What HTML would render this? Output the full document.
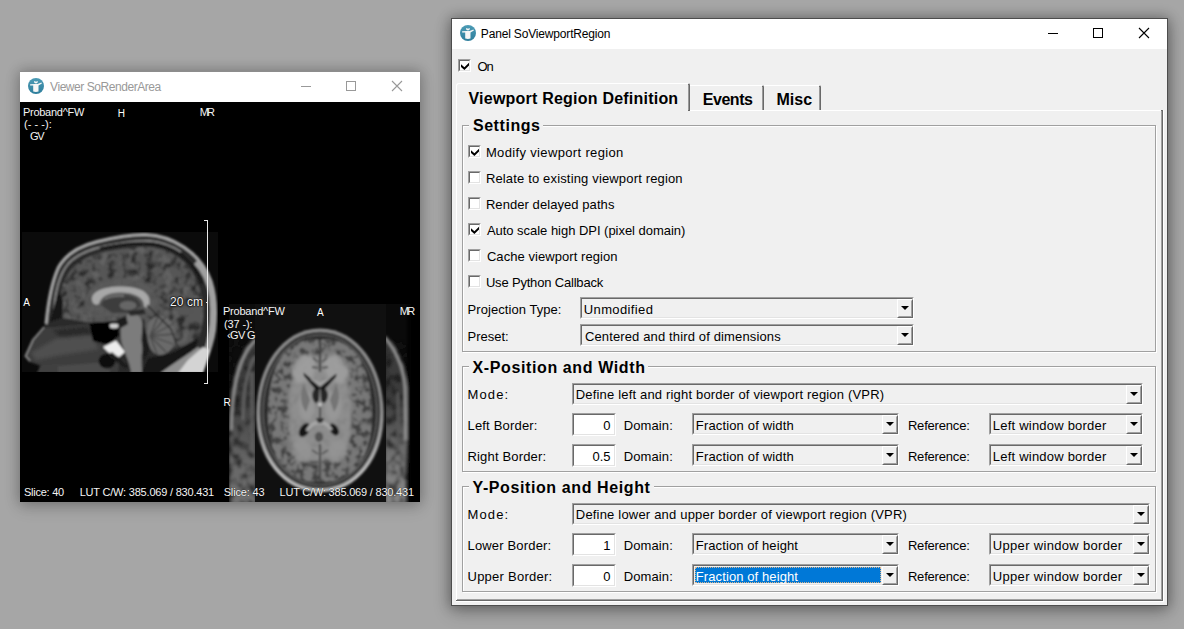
<!DOCTYPE html>
<html><head><meta charset="utf-8"><title>Panel SoViewportRegion</title>
<style>
html,body{margin:0;padding:0}
body{width:1184px;height:629px;overflow:hidden;position:relative;background:#a6a6a6;font-family:"Liberation Sans",sans-serif;}
.t{position:absolute;white-space:nowrap;line-height:1;}
.sunk{position:absolute;box-sizing:border-box;border:1px solid;border-color:#a0a0a0 #fff #fff #a0a0a0;}
.sunk i{position:absolute;left:0;top:0;right:0;bottom:0;border:1px solid;border-color:#696969 #e3e3e3 #e3e3e3 #696969;}
.btn{position:absolute;box-sizing:border-box;background:#f0f0f0;border:1px solid;border-color:#fff #696969 #696969 #fff;}
.btn:before{content:"";position:absolute;left:0;top:0;right:0;bottom:0;border:1px solid;border-color:#f0f0f0 #a0a0a0 #a0a0a0 #f0f0f0;}
.btn b{position:absolute;left:3px;top:6px;width:0;height:0;border-left:4px solid transparent;border-right:4px solid transparent;border-top:4px solid #000;}
.cb{position:absolute;width:13px;height:13px;box-sizing:border-box;background:#fff;border:1px solid;border-color:#a0a0a0 #fff #fff #a0a0a0;}
.cb i{position:absolute;left:0;top:0;right:0;bottom:0;border:1px solid;border-color:#696969 #e3e3e3 #e3e3e3 #696969;}
.cb svg{position:absolute;left:-1px;top:-1px}
.grp{position:absolute;box-sizing:border-box;border:1px solid #a0a0a0;box-shadow:1px 1px 0 #fff;}
.grp i{position:absolute;left:0;top:0;right:0;bottom:0;border-top:1px solid #fff;border-left:1px solid #fff;}
</style></head><body>
<div style="position:absolute;left:20px;top:71px;width:400px;height:431px;background:#000;box-shadow:0 0 12px 1px rgba(0,0,0,.22), 0 5px 16px rgba(0,0,0,.16);border-top:1px solid #8d8d8d;box-sizing:border-box"></div>
<div style="position:absolute;left:20px;top:72px;width:400px;height:30px;background:#fff"></div>
<svg style="position:absolute;left:28px;top:78px" width="16" height="16" viewBox="0 0 16 16"><circle cx="8" cy="8" r="8" fill="url(#ig)"/><path d="M2.1 6.3 L6.5 6.1 L9.5 6.1 L13.4 4.4 L13.9 5.5 L10.5 7.4 L10.5 13.6 Q8 14.4 5.2 13.6 L5.2 7.6 L2.1 7.6 Z" fill="#f6f6f6"/><path d="M6 2.9 Q8 4.3 9.8 2.9 L9.8 4 Q9.6 5.4 8 5.4 Q6.2 5.4 6 4 Z" fill="#f6f6f6"/></svg>
<svg style="position:absolute;left:290px;top:72px" width="130" height="30" viewBox="0 0 130 30"><path d="M11 14.5 H21" stroke="#999" stroke-width="1" fill="none"/><rect x="56.5" y="9.5" width="9" height="9" stroke="#999" fill="none"/><path d="M102 9 L112 19 M112 9 L102 19" stroke="#999" stroke-width="1.1" fill="none"/></svg>
<svg style="position:absolute;left:20px;top:102px" width="400" height="400" viewBox="20 102 400 400">
<defs>
<filter id="b1" x="-10%" y="-10%" width="120%" height="120%"><feGaussianBlur stdDeviation="0.9"/></filter>
<filter id="b2" x="-10%" y="-10%" width="120%" height="120%"><feGaussianBlur stdDeviation="1.6"/></filter>
<filter id="b3" x="-20%" y="-20%" width="140%" height="140%"><feGaussianBlur stdDeviation="3"/></filter>
<filter id="tx" color-interpolation-filters="sRGB" x="0" y="0" width="100%" height="100%"><feTurbulence type="fractalNoise" baseFrequency="0.13" numOctaves="2" seed="4" result="n"/><feColorMatrix in="n" type="matrix" values="0 0 0 0 0  0 0 0 0 0  0 0 0 0 0  -4 0 0 0 2.1"/></filter>
<filter id="tx2" color-interpolation-filters="sRGB" x="0" y="0" width="100%" height="100%"><feTurbulence type="fractalNoise" baseFrequency="0.11" numOctaves="2" seed="9" result="n"/><feColorMatrix in="n" type="matrix" values="0 0 0 0 0.45  0 0 0 0 0.45  0 0 0 0 0.45  4 0 0 0 -2.0"/></filter>
<filter id="tx3" color-interpolation-filters="sRGB" x="0" y="0" width="100%" height="100%"><feTurbulence type="fractalNoise" baseFrequency="0.16" numOctaves="2" seed="12" result="n"/><feColorMatrix in="n" type="matrix" values="0 0 0 0 0.17  0 0 0 0 0.17  0 0 0 0 0.17  -4.5 0 0 0 2.45"/></filter>
<filter id="tx4" color-interpolation-filters="sRGB" x="0" y="0" width="100%" height="100%"><feTurbulence type="fractalNoise" baseFrequency="0.12" numOctaves="2" seed="21" result="n"/><feColorMatrix in="n" type="matrix" values="0 0 0 0 0.08  0 0 0 0 0.08  0 0 0 0 0.08  -4 0 0 0 2.2"/></filter>
<linearGradient id="gl" x1="0" y1="0" x2="0" y2="1"><stop offset="0" stop-color="#6c6c6c" stop-opacity="0"/><stop offset="0.6" stop-color="#6c6c6c" stop-opacity="0.9"/><stop offset="1" stop-color="#707070"/></linearGradient>
<linearGradient id="gr" x1="0" y1="0" x2="0" y2="1"><stop offset="0" stop-color="#808080" stop-opacity="0"/><stop offset="0.6" stop-color="#808080" stop-opacity="0.9"/><stop offset="1" stop-color="#868686"/></linearGradient>
<linearGradient id="gsk" gradientUnits="userSpaceOnUse" x1="0" y1="400" x2="0" y2="470"><stop offset="0" stop-color="#bcbcbc" stop-opacity="0"/><stop offset="1" stop-color="#bcbcbc" stop-opacity="1"/></linearGradient>
<clipPath id="cs"><rect x="20" y="232" width="198" height="140"/></clipPath>
<clipPath id="ca"><rect x="255" y="304" width="131" height="198"/></clipPath>
<clipPath id="cl"><rect x="229" y="304" width="26" height="198"/></clipPath>
<clipPath id="cr"><rect x="386" y="304" width="25" height="198"/></clipPath>
</defs>
<rect x="22" y="232" width="196" height="140" fill="#0b0b0b"/>
<g clip-path="url(#cs)"><g filter="url(#b1)">
<path d="M46 324 C48 302 51 284 58 268 C65 255 79 246 97 241.5 C117 236.5 134 234 146 234.5 C160 235 172 239 184 247 C196 255 206 267 211 281 C215.5 295 216.5 312 214.5 330 C212.5 345 207 358 201 374 L36 374 L40 366 L29 362 L24.5 356 L32 339 L44 327 Z" fill="#2c2c2c"/>
<path d="M45 328 L112 322 L122 340 L118 372 L40 372 L41 365 L30 361 L26.5 356 L34 341 Z" fill="#3e3e3e"/>
<path d="M31 353 L58 338 L92 335 L98 349 L60 355 L36 360 Z" fill="#505050" filter="url(#b2)"/>
<path d="M52 330 L88 326 L92 334 L60 337 Z" fill="#2c2c2c" filter="url(#b2)"/>
<path d="M58 366 L108 362 L110 373 L58 373 Z" fill="#4c4c4c"/>
<path d="M40 366 L58 364 L58 373 L38 373 Z" fill="#404040"/>
<path d="M44 327 L33 340 L25.5 356 L30 361" stroke="#8a8a8a" stroke-width="1.8" fill="none"/>
<path d="M63 318 C58 300 61 285 68 274 C76 262 90 254.5 106 251.5 C124 248 140 246.5 150 247 C164 248.5 175 254 185 263 C194 272 200 286 202.5 300 C204.5 316 202 332 196 344 C190 352 183 355 176 351 L150 344 L120 322 L92 323 Z" fill="#565656"/>
<clipPath id="cb"><path d="M63 318 C58 300 61 285 68 274 C76 262 90 254.5 106 251.5 C124 248 140 246.5 150 247 C164 248.5 175 254 185 263 C194 272 200 286 202.5 300 C204.5 316 202 332 196 344 C190 352 183 355 176 351 L150 344 L120 322 L92 323 Z"/></clipPath>
<g clip-path="url(#cb)"><rect x="55" y="240" width="155" height="120" filter="url(#tx)" opacity="0.5"/><rect x="55" y="240" width="155" height="120" filter="url(#tx2)" opacity="0.5"/></g>
<path d="M84 306 C84 288 102 279 122 279 C142 279 156 287 158 302 L150 316 L96 318 Z" fill="#5b5b5b" opacity="0.85"/>
<path d="M46 324 C48 302 51 284 58 268 C65 255 79 246 97 241.5 C117 236.5 134 234 146 234.5 C160 235 172 239 184 247 C196 255 206 267 211 281 C215.5 295 216.5 312 214.5 330 C212.5 345 207 358 201 374" fill="none" stroke="#a6a6a6" stroke-width="3"/>
<path d="M196 262 C204 270 209.5 282 212 296 C214 312 212.5 330 209 344 C206 355 202 364 198 372" fill="none" stroke="#a0a0a0" stroke-width="5.5"/>
<path d="M54 312 C55 290 60 274 68 264 C77 254 91 249 105 246 C124 242 140 240.5 150 241 C162 242 172 246 181 252" fill="none" stroke="#868686" stroke-width="2"/>
<path d="M100 248.5 C124 243.5 140 243 150 243.5 C162 244.5 172 248.5 182 255.5 C192 263 199 274 202 284" fill="none" stroke="#161616" stroke-width="3"/>
<path d="M50 322 L62 318 L63 300 L58 292 Z" fill="#141414"/>
<path d="M89 323 L117 321 L119 336 L108 345 L93 341 Z" fill="#040404"/>
<ellipse cx="107" cy="361" rx="8.5" ry="7.5" fill="#0b0b0b"/>
<ellipse cx="114" cy="326" rx="4.5" ry="2.4" fill="#cfcfcf"/>
<path d="M103 347 L116 340.5 L125 352 L119 357 L108 352 Z" fill="#ececec"/>
<path d="M112 352 L128 366 L126 369 L108 356 Z" fill="#1a1a1a"/>
<path d="M92 300 C91 291.5 104 286.5 120 286.5 C136 286.5 148.5 290.5 149.5 300 C150.5 306.5 146 309.5 144 306 C144 297 134 292.5 120 292.5 C108 292.5 101 296.5 99 304 C96 306 92.5 304 92 300 Z" fill="#a8a8a8"/>
<path d="M101 305 C104 297 112 295 122 295 C132 295 140 298 141 306 L130 313 L112 313 Z" fill="#3e3e3e"/>
<ellipse cx="128" cy="305.5" rx="8.5" ry="4.5" fill="#666"/>
<path d="M105 299 C110 296 118 295.5 124 296" stroke="#6e6e6e" stroke-width="2" fill="none"/>
<path d="M124 318 C128 312 138 312 141.5 320 C146 332 143.5 344 141.5 356 L142 373 L131 373 C130 360 122 350 121 338 C120 330 121 323 124 318 Z" fill="#7c7c7c"/>
<path d="M117 320 L126 315.5 L128 324 L121 328 Z" fill="#1e1e1e"/>
<path d="M128 311 L144 309 L146 314 L130 316 Z" fill="#2a2a2a"/>
<path d="M148 324 C154 312 170 314 174 328 C178 342 172 354 160 355 C150 355 145 340 148 324 Z" fill="#6a6a6a"/>
<path d="M150 336 L166 317 M150 336 L173 324 M150 336 L175 334 M150 336 L173 344 M150 336 L166 352 M150 336 L157 354 M150 336 L158 316" stroke="#474747" stroke-width="1.3" fill="none"/>
<path d="M143 318 L149.5 350 L144 362 L141.5 340 Z" fill="#1c1c1c"/>
<path d="M147 305 L171 329 L179 351" stroke="#2e2e2e" stroke-width="1.6" fill="none"/>
<path d="M148 358 L172 353 L198 338 L196 349 L160 374 L141 374 Z" fill="#161616"/>
<path d="M160 373 L178 360 L198 347 L204 351 L196 373 Z" fill="#8e8e8e"/>
<path d="M178 373 L188 360 L203 347 L210 350 L203 373 Z" fill="#d4d4d4"/>
<path d="M158 373 L192 350" stroke="#101010" stroke-width="1.6"/>
</g></g>
<path d="M203.5 220.5 H207.5 V383.5 H203.5 M205.5 302.5 H207.5" stroke="#e8e8e8" stroke-width="1" fill="none" shape-rendering="crispEdges"/>
<rect x="229" y="304" width="182" height="198" fill="#0a0a0a"/>
<g clip-path="url(#cl)"><rect x="229" y="304" width="26" height="198" fill="#0c0c0c"/><g filter="url(#b2)">
<path d="M231 410 C231 380 238 352 256 338 L256 504 L229 504 L229 440 Z" fill="#3c3c3c"/>
<rect x="229" y="400" width="27" height="104" fill="url(#gl)"/>
<rect x="229" y="340" width="26" height="164" filter="url(#tx4)" opacity="0.7"/>
<path d="M231 430 C231 392 238 356 256 339" stroke="#9c9c9c" stroke-width="2.6" fill="none"/>
<path d="M243 420 C243 392 247 370 255 356" stroke="#6c6c6c" stroke-width="2.2" fill="none"/>
<path d="M252 372 L252 450" stroke="#5e5e5e" stroke-width="3"/>
</g></g>
<g clip-path="url(#cr)"><rect x="386" y="304" width="25" height="198" fill="#0a0a0a"/><g filter="url(#b2)">
<path d="M385 338 C396 350 404 366 405.5 386 L406 504 L385 504 Z" fill="#3a3a3a"/>
<rect x="385" y="400" width="21" height="104" fill="url(#gr)"/>
<rect x="386" y="340" width="22" height="164" filter="url(#tx4)" opacity="0.7"/>
<path d="M385 337 C396 350 404 366 405.5 388 L406 440" stroke="#a4a4a4" stroke-width="2.6" fill="none"/>
<path d="M406 440 L405 470" stroke="#6a6a6a" stroke-width="2.4" fill="none"/>
<path d="M398 392 L398 452" stroke="#585858" stroke-width="3"/>
<rect x="407.5" y="304" width="4" height="200" fill="#050505"/>
</g></g>
<g clip-path="url(#ca)"><rect x="255" y="304" width="131" height="198" fill="#101010"/><g filter="url(#b1)">
<path d="M320 328.5 C358.1 328.5 383.5 367.62 383.5 412 C383.5 457.27 356.83 491.5 320 491.5 C283.17 491.5 256.5 457.27 256.5 412 C256.5 367.62 281.9 328.5 320 328.5 Z" fill="#8c8c8c"/>
<clipPath id="cbk"><rect x="255" y="440" width="131" height="62"/></clipPath>
<path d="M320 329.3 C357.62 329.3 382.7 368.036 382.7 412 C382.7 456.806 356.366 490.7 320 490.7 C283.634 490.7 257.3 456.806 257.3 412 C257.3 368.036 282.38 329.3 320 329.3 Z" fill="none" stroke="url(#gsk)" stroke-width="3"/>
<path d="M320 331.7 C356.18 331.7 380.3 369.284 380.3 412 C380.3 455.414 354.974 488.3 320 488.3 C285.026 488.3 259.7 455.414 259.7 412 C259.7 369.284 283.82 331.7 320 331.7 Z" fill="#333"/>
<path d="M320 334.4 C354.56 334.4 377.6 370.688 377.6 412 C377.6 453.848 353.408 485.6 320 485.6 C286.592 485.6 262.4 453.848 262.4 412 C262.4 370.688 285.44 334.4 320 334.4 Z" fill="#5e5e5e"/>
<path d="M320 335.8 C353.72 335.8 376.2 371.416 376.2 412 C376.2 453.036 352.596 484.2 320 484.2 C287.404 484.2 263.8 453.036 263.8 412 C263.8 371.416 286.28 335.8 320 335.8 Z" fill="#2a2a2a"/>
<path d="M320 340 C331 337 348 342 358 356 C367 369 371 388 372 408 C373 430 369 452 358 466 C348 478 332 484 320 481 C308 484 292 478 282 466 C271 452 267 430 268 408 C269 388 273 369 282 356 C292 342 309 337 320 340 Z" fill="#787878"/>
<clipPath id="cba"><path d="M320 340 C331 337 348 342 358 356 C367 369 371 388 372 408 C373 430 369 452 358 466 C348 478 332 484 320 481 C308 484 292 478 282 466 C271 452 267 430 268 408 C269 388 273 369 282 356 C292 342 309 337 320 340 Z"/></clipPath>
<g clip-path="url(#cba)"><rect x="262" y="334" width="116" height="152" filter="url(#tx3)" opacity="0.7"/></g>
<g filter="url(#b2)">
<path d="M320 356 C332 354 344 364 348 380 C352 398 353 420 350 438 C346 454 336 462 320 460 C304 462 294 454 290 438 C287 420 288 398 292 380 C296 364 308 354 320 356 Z" fill="#929292" opacity="0.85"/>
<path d="M300 356 C308 352 316 356 316 366 L312 380 L298 384 L290 372 Z M340 356 C332 352 324 356 324 366 L328 380 L342 384 L350 372 Z" fill="#9e9e9e" opacity="0.9"/>
<path d="M296 440 C300 436 310 440 312 448 L308 462 L298 462 L292 452 Z M344 440 C340 436 330 440 328 448 L332 462 L342 462 L348 452 Z" fill="#949494" opacity="0.85"/>
<ellipse cx="307" cy="406" rx="8" ry="15" fill="#979797"/><ellipse cx="333" cy="406" rx="8" ry="15" fill="#979797"/>
</g>
<path d="M304 384 C300 392 300 404 306 412 L310 400 Z M336 384 C340 392 340 404 334 412 L330 400 Z" fill="#747474"/>
<path d="M320 340 L320 372" stroke="#3c3c3c" stroke-width="2.2"/>
<path d="M313 358 L318 362 M327 358 L322 362 M312 367 L318 368 M328 367 L322 368" stroke="#555" stroke-width="1.8"/>
<path d="M320 444 L320 482" stroke="#444" stroke-width="2"/>
<path d="M312 450 L318 454 M328 450 L322 454 M310 462 L318 462 M330 462 L322 462 M313 472 L318 470 M327 472 L322 470" stroke="#555" stroke-width="1.8"/>
<path d="M303.5 372.5 L320 386 L336.5 373.5 L336 377 L325 389 C327 394 326.5 399 323.5 402.5 L321 400 L320.6 389 L319.4 389 L319 400 L316.5 402.5 C313.5 399 313 394 315 389 L304 376 Z" fill="#141414"/>
<path d="M314.5 389 C311 393 311.5 400 316 403.5 L318.6 401 L318.6 390 Z M325.5 389 C329 393 328.5 400 324 403.5 L321.4 401 L321.4 390 Z" fill="#262626"/>
<path d="M309 378 L320 387 L331 378 L320 382 Z" fill="#a2a2a2"/>
<circle cx="320" cy="404.5" r="1.7" fill="#c8c8c8"/>
<path d="M320 407 L320 420" stroke="#444" stroke-width="1.8"/>
<ellipse cx="304.5" cy="430" rx="4.6" ry="7.6" transform="rotate(32 304.5 430)" fill="#141414"/>
<ellipse cx="334" cy="429.5" rx="4" ry="6.6" transform="rotate(-32 334 429.5)" fill="#141414"/>
<path d="M307 431 C310 425 314.5 422.5 319.5 422.5 C324.5 422.5 328.5 425 331.5 430" stroke="#a6a6a6" stroke-width="3.4" fill="none"/>
<path d="M316 418 L324 418 L322 423 L318 423 Z" fill="#333"/>
<ellipse cx="319" cy="437" rx="4" ry="5" fill="#555"/>
</g></g>
</svg>
<div style="position:absolute;left:451px;top:18px;width:717px;height:588px;background:#f0f0f0;border:1px solid #4d4d4d;box-sizing:border-box;box-shadow:0 0 12px 1px rgba(0,0,0,.30), 0 6px 17px rgba(0,0,0,.24)"></div>
<div style="position:absolute;left:452px;top:19px;width:715px;height:30px;background:#fff"></div>
<svg style="position:absolute;left:460px;top:25px" width="16" height="16" viewBox="0 0 16 16"><defs><linearGradient id="ig" x1="0" y1="0" x2="0" y2="1"><stop offset="0" stop-color="#4c9bb5"/><stop offset="1" stop-color="#2e7e9c"/></linearGradient></defs><circle cx="8" cy="8" r="8" fill="url(#ig)"/><path d="M2.1 6.3 L6.5 6.1 L9.5 6.1 L13.4 4.4 L13.9 5.5 L10.5 7.4 L10.5 13.6 Q8 14.4 5.2 13.6 L5.2 7.6 L2.1 7.6 Z" fill="#f6f6f6"/><path d="M6 2.9 Q8 4.3 9.8 2.9 L9.8 4 Q9.6 5.4 8 5.4 Q6.2 5.4 6 4 Z" fill="#f6f6f6"/></svg>
<div id="p_title" class="t" style="left:480.8px;top:28.03px;font-size:12px;font-weight:normal;color:#000;letter-spacing:-0.167px;">Panel SoViewportRegion</div>
<svg style="position:absolute;left:1040px;top:22px" width="120" height="24" viewBox="0 0 120 24"><path d="M8 11.5 H18" stroke="#000" stroke-width="1" fill="none"/><rect x="53.5" y="6.5" width="9" height="9" stroke="#000" fill="none"/><path d="M99 6 L109 16 M109 6 L99 16" stroke="#000" stroke-width="1.1" fill="none"/></svg>
<div class="cb" style="left:458px;top:59px"><i></i><svg width="13" height="13" viewBox="0 0 13 13"><path d="M3 5.2 L3 8 L6.4 11 L11 6.4 L11 3.8 L6.4 8.2 Z" fill="#000"/></svg></div>
<div id="on" class="t" style="left:477.5px;top:59.70px;font-size:13px;font-weight:normal;color:#000;letter-spacing:-1.000px;">On</div>
<div style="position:absolute;left:456px;top:110px;width:708px;height:492px;box-sizing:border-box;border:1px solid #fff"></div>
<div style="position:absolute;left:456px;top:110px;width:707px;height:491px;box-sizing:border-box;border-right:2px solid #696969;border-bottom:1px solid #696969"></div>
<div style="position:absolute;left:1161px;top:111px;width:1px;height:489px;background:#a0a0a0"></div>
<div style="position:absolute;left:457px;top:599px;width:705px;height:1px;background:#a0a0a0"></div>
<div style="position:absolute;left:456px;top:83px;width:234px;height:28px;background:#f0f0f0;box-sizing:border-box;border-top:1px solid #fff;border-left:1px solid #fff;border-right:2px solid #696969;border-top-left-radius:3px;border-top-right-radius:2px"></div>
<div style="position:absolute;left:688px;top:85px;width:1px;height:25px;background:#9a9a9a"></div>
<div style="position:absolute;left:690px;top:85px;width:74px;height:25px;box-sizing:border-box;border-top:1px solid #fff;border-right:2px solid #696969;border-top-right-radius:2px"></div>
<div style="position:absolute;left:762px;top:87px;width:1px;height:23px;background:#9a9a9a"></div>
<div style="position:absolute;left:764px;top:85px;width:57px;height:25px;box-sizing:border-box;border-top:1px solid #fff;border-right:2px solid #696969;border-top-right-radius:2px"></div>
<div style="position:absolute;left:819px;top:87px;width:1px;height:23px;background:#9a9a9a"></div>
<div id="tab1" class="t" style="left:468.5px;top:90.61px;font-size:16px;font-weight:bold;color:#000;letter-spacing:0.220px;">Viewport Region Definition</div>
<div id="tab2" class="t" style="left:702.7px;top:91.61px;font-size:16px;font-weight:bold;color:#000;letter-spacing:-0.440px;">Events</div>
<div id="tab3" class="t" style="left:776.5px;top:91.61px;font-size:16px;font-weight:bold;color:#000;letter-spacing:0.000px;">Misc</div>
<div class="grp" style="left:462px;top:125px;width:694px;height:227px"><i></i></div>
<div style="position:absolute;left:469.4px;top:123px;width:74.0px;height:5px;background:#f0f0f0"></div>
<div id="g1" class="t" style="left:472.9px;top:118.41px;font-size:16px;font-weight:bold;color:#000;letter-spacing:0.571px;">Settings</div>
<div class="cb" style="left:468px;top:145px"><i></i><svg width="13" height="13" viewBox="0 0 13 13"><path d="M3 5.2 L3 8 L6.4 11 L11 6.4 L11 3.8 L6.4 8.2 Z" fill="#000"/></svg></div>
<div id="c1" class="t" style="left:485.9px;top:145.70px;font-size:13px;font-weight:normal;color:#000;letter-spacing:0.352px;">Modify viewport region</div>
<div class="cb" style="left:468px;top:171px"><i></i></div>
<div id="c2" class="t" style="left:485.9px;top:171.70px;font-size:13px;font-weight:normal;color:#000;letter-spacing:0.158px;">Relate to existing viewport region</div>
<div class="cb" style="left:468px;top:197px"><i></i></div>
<div id="c3" class="t" style="left:485.9px;top:197.70px;font-size:13px;font-weight:normal;color:#000;letter-spacing:0.068px;">Render delayed paths</div>
<div class="cb" style="left:468px;top:223px"><i></i><svg width="13" height="13" viewBox="0 0 13 13"><path d="M3 5.2 L3 8 L6.4 11 L11 6.4 L11 3.8 L6.4 8.2 Z" fill="#000"/></svg></div>
<div id="c4" class="t" style="left:486.9px;top:223.70px;font-size:13px;font-weight:normal;color:#000;letter-spacing:-0.030px;">Auto scale high DPI (pixel domain)</div>
<div class="cb" style="left:468px;top:249px"><i></i></div>
<div id="c5" class="t" style="left:486.9px;top:249.70px;font-size:13px;font-weight:normal;color:#000;letter-spacing:0.065px;">Cache viewport region</div>
<div class="cb" style="left:468px;top:275px"><i></i></div>
<div id="c6" class="t" style="left:485.9px;top:275.70px;font-size:13px;font-weight:normal;color:#000;letter-spacing:-0.183px;">Use Python Callback</div>
<div id="l_proj" class="t" style="left:467.5px;top:302.70px;font-size:13px;font-weight:normal;color:#000;letter-spacing:0.067px;">Projection Type:</div>
<div class="sunk" style="left:580px;top:297px;width:334px;height:22px;background:#f0f0f0"><i></i></div>
<div class="btn" style="left:897px;top:299px;width:16px;height:19px"><b></b></div>
<div id="v_proj" class="t" style="left:583.8px;top:302.70px;font-size:13px;font-weight:normal;color:#000;letter-spacing:0.367px;">Unmodified</div>
<div id="l_pre" class="t" style="left:467.5px;top:329.70px;font-size:13px;font-weight:normal;color:#000;letter-spacing:0.000px;">Preset:</div>
<div class="sunk" style="left:580px;top:324px;width:334px;height:22px;background:#f0f0f0"><i></i></div>
<div class="btn" style="left:897px;top:326px;width:16px;height:19px"><b></b></div>
<div id="v_pre" class="t" style="left:584.9px;top:329.70px;font-size:13px;font-weight:normal;color:#000;letter-spacing:0.139px;">Centered and third of dimensions</div>
<div class="grp" style="left:462px;top:366px;width:694px;height:106px"><i></i></div>
<div style="position:absolute;left:469px;top:364px;width:178.70000000000005px;height:5px;background:#f0f0f0"></div>
<div id="xg" class="t" style="left:472.5px;top:359.51px;font-size:16px;font-weight:bold;color:#000;letter-spacing:0.616px;">X-Position and Width</div>
<div id="xlm" class="t" style="left:467.5px;top:387.70px;font-size:13px;font-weight:normal;color:#000;letter-spacing:1.125px;">Mode:</div>
<div class="sunk" style="left:572px;top:383px;width:571px;height:22px;background:#f0f0f0"><i></i></div>
<div class="btn" style="left:1126px;top:385px;width:16px;height:19px"><b></b></div>
<div id="xvm" class="t" style="left:575.8px;top:387.70px;font-size:13px;font-weight:normal;color:#000;letter-spacing:0.175px;">Define left and right border of viewport region (VPR)</div>
<div id="xl0" class="t" style="left:467.5px;top:418.70px;font-size:13px;font-weight:normal;color:#000;letter-spacing:0.182px;">Left Border:</div>
<div class="sunk" style="left:572px;top:413px;width:44px;height:23px;background:#fff"><i></i></div>
<div id="xv0" class="t" style="left:0.5px;top:418.70px;font-size:13px;font-weight:normal;color:#000;letter-spacing:0.000px;left:auto;right:573.5px;">0</div>
<div id="xd0" class="t" style="left:623.8px;top:418.70px;font-size:13px;font-weight:normal;color:#000;letter-spacing:0.100px;">Domain:</div>
<div class="sunk" style="left:692px;top:413px;width:207px;height:22px;background:#f0f0f0"><i></i></div>
<div class="btn" style="left:882px;top:415px;width:16px;height:19px"><b></b></div>
<div id="xf0" class="t" style="left:695.8px;top:418.70px;font-size:13px;font-weight:normal;color:#000;letter-spacing:0.156px;">Fraction of width</div>
<div id="xr0" class="t" style="left:907.9px;top:418.70px;font-size:13px;font-weight:normal;color:#000;letter-spacing:-0.189px;">Reference:</div>
<div class="sunk" style="left:989px;top:413px;width:154px;height:22px;background:#f0f0f0"><i></i></div>
<div class="btn" style="left:1126px;top:415px;width:16px;height:19px"><b></b></div>
<div id="xw0" class="t" style="left:992.8px;top:418.70px;font-size:13px;font-weight:normal;color:#000;letter-spacing:0.218px;">Left window border</div>
<div id="xl1" class="t" style="left:467.5px;top:449.70px;font-size:13px;font-weight:normal;color:#000;letter-spacing:0.167px;">Right Border:</div>
<div class="sunk" style="left:572px;top:444px;width:44px;height:23px;background:#fff"><i></i></div>
<div id="xv1" class="t" style="left:0.5px;top:449.70px;font-size:13px;font-weight:normal;color:#000;letter-spacing:0.000px;left:auto;right:573.5px;">0.5</div>
<div id="xd1" class="t" style="left:623.8px;top:449.70px;font-size:13px;font-weight:normal;color:#000;letter-spacing:0.100px;">Domain:</div>
<div class="sunk" style="left:692px;top:444px;width:207px;height:22px;background:#f0f0f0"><i></i></div>
<div class="btn" style="left:882px;top:446px;width:16px;height:19px"><b></b></div>
<div id="xf1" class="t" style="left:695.8px;top:449.70px;font-size:13px;font-weight:normal;color:#000;letter-spacing:0.156px;">Fraction of width</div>
<div id="xr1" class="t" style="left:907.9px;top:449.70px;font-size:13px;font-weight:normal;color:#000;letter-spacing:-0.189px;">Reference:</div>
<div class="sunk" style="left:989px;top:444px;width:154px;height:22px;background:#f0f0f0"><i></i></div>
<div class="btn" style="left:1126px;top:446px;width:16px;height:19px"><b></b></div>
<div id="xw1" class="t" style="left:992.8px;top:449.70px;font-size:13px;font-weight:normal;color:#000;letter-spacing:0.218px;">Left window border</div>
<div class="grp" style="left:462px;top:486px;width:694px;height:106px"><i></i></div>
<div style="position:absolute;left:469px;top:484px;width:185px;height:5px;background:#f0f0f0"></div>
<div id="yg" class="t" style="left:472.5px;top:479.51px;font-size:16px;font-weight:bold;color:#000;letter-spacing:0.600px;">Y-Position and Height</div>
<div id="ylm" class="t" style="left:467.5px;top:507.70px;font-size:13px;font-weight:normal;color:#000;letter-spacing:1.125px;">Mode:</div>
<div class="sunk" style="left:572px;top:503px;width:578px;height:22px;background:#f0f0f0"><i></i></div>
<div class="btn" style="left:1133px;top:505px;width:16px;height:19px"><b></b></div>
<div id="yvm" class="t" style="left:575.8px;top:507.70px;font-size:13px;font-weight:normal;color:#000;letter-spacing:0.192px;">Define lower and upper border of viewport region (VPR)</div>
<div id="yl0" class="t" style="left:467.5px;top:538.70px;font-size:13px;font-weight:normal;color:#000;letter-spacing:0.167px;">Lower Border:</div>
<div class="sunk" style="left:572px;top:533px;width:44px;height:23px;background:#fff"><i></i></div>
<div id="yv0" class="t" style="left:-0.5px;top:538.70px;font-size:13px;font-weight:normal;color:#000;letter-spacing:0.000px;left:auto;right:573.5px;">1</div>
<div id="yd0" class="t" style="left:623.8px;top:538.70px;font-size:13px;font-weight:normal;color:#000;letter-spacing:0.100px;">Domain:</div>
<div class="sunk" style="left:692px;top:533px;width:207px;height:22px;background:#f0f0f0"><i></i></div>
<div class="btn" style="left:882px;top:535px;width:16px;height:19px"><b></b></div>
<div id="yf0" class="t" style="left:695.8px;top:538.70px;font-size:13px;font-weight:normal;color:#000;letter-spacing:0.100px;">Fraction of height</div>
<div id="yr0" class="t" style="left:907.9px;top:538.70px;font-size:13px;font-weight:normal;color:#000;letter-spacing:-0.189px;">Reference:</div>
<div class="sunk" style="left:989px;top:533px;width:161px;height:22px;background:#f0f0f0"><i></i></div>
<div class="btn" style="left:1133px;top:535px;width:16px;height:19px"><b></b></div>
<div id="yw0" class="t" style="left:992.8px;top:538.70px;font-size:13px;font-weight:normal;color:#000;letter-spacing:0.317px;">Upper window border</div>
<div id="yl1" class="t" style="left:467.5px;top:569.70px;font-size:13px;font-weight:normal;color:#000;letter-spacing:0.250px;">Upper Border:</div>
<div class="sunk" style="left:572px;top:564px;width:44px;height:23px;background:#fff"><i></i></div>
<div id="yv1" class="t" style="left:0.5px;top:569.70px;font-size:13px;font-weight:normal;color:#000;letter-spacing:0.000px;left:auto;right:573.5px;">0</div>
<div id="yd1" class="t" style="left:623.8px;top:569.70px;font-size:13px;font-weight:normal;color:#000;letter-spacing:0.100px;">Domain:</div>
<div class="sunk" style="left:692px;top:564px;width:207px;height:22px;background:#f0f0f0"><i></i></div>
<div class="btn" style="left:882px;top:566px;width:16px;height:19px"><b></b></div>
<div style="position:absolute;left:695px;top:567px;width:186px;height:16px;background:#0078d7;outline:1px dotted #d8b48c;outline-offset:-1px"></div>
<div id="yf1" class="t" style="left:695.8px;top:569.70px;font-size:13px;font-weight:normal;color:#fff;letter-spacing:0.100px;">Fraction of height</div>
<div id="yr1" class="t" style="left:907.9px;top:569.70px;font-size:13px;font-weight:normal;color:#000;letter-spacing:-0.189px;">Reference:</div>
<div class="sunk" style="left:989px;top:564px;width:161px;height:22px;background:#f0f0f0"><i></i></div>
<div class="btn" style="left:1133px;top:566px;width:16px;height:19px"><b></b></div>
<div id="yw1" class="t" style="left:992.8px;top:569.70px;font-size:13px;font-weight:normal;color:#000;letter-spacing:0.317px;">Upper window border</div>
<div id="v_title" class="t" style="left:50.1px;top:81.03px;font-size:12px;font-weight:normal;color:#999;letter-spacing:-0.450px;">Viewer SoRenderArea</div>
<div id="va1" class="t" style="left:23.0px;top:106.86px;font-size:11px;font-weight:normal;color:#f4f4f4;letter-spacing:-0.278px;">Proband^FW</div>
<div id="va2" class="t" style="left:24.0px;top:119.16px;font-size:11px;font-weight:normal;color:#f4f4f4;letter-spacing:0.043px;">(- - -):</div>
<div id="va3" class="t" style="left:30.0px;top:130.76px;font-size:11px;font-weight:normal;color:#f4f4f4;letter-spacing:-1.400px;">GV</div>
<div id="va4" class="t" style="left:117.8px;top:108.59px;font-size:10px;font-weight:normal;color:#fff;letter-spacing:0.000px;">H</div>
<div id="va5" class="t" style="left:199.7px;top:106.86px;font-size:11px;font-weight:normal;color:#f4f4f4;letter-spacing:-1.800px;">MR</div>
<div id="va6" class="t" style="left:23.2px;top:297.69px;font-size:10px;font-weight:normal;color:#fff;letter-spacing:0.000px;">A</div>
<div id="va7" class="t" style="left:170.0px;top:295.83px;font-size:12px;font-weight:normal;color:#f4f4f4;letter-spacing:0.100px;text-shadow:0 0 2px #000,0 0 2px #000,0 0 1px #000;">20 cm</div>
<div id="va8" class="t" style="left:24.0px;top:487.16px;font-size:11px;font-weight:normal;color:#f4f4f4;letter-spacing:-0.250px;">Slice: 40</div>
<div id="va9" class="t" style="left:79.7px;top:487.16px;font-size:11px;font-weight:normal;color:#f4f4f4;letter-spacing:-0.204px;">LUT C/W: 385.069 / 830.431</div>
<div id="vb1" class="t" style="left:223.0px;top:306.26px;font-size:11px;font-weight:normal;color:#f4f4f4;letter-spacing:-0.222px;">Proband^FW</div>
<div id="vb2" class="t" style="left:224.0px;top:318.66px;font-size:11px;font-weight:normal;color:#f4f4f4;letter-spacing:-0.133px;">(37 -):</div>
<div id="vb3" class="t" style="left:227.0px;top:330.16px;font-size:11px;font-weight:normal;color:#f4f4f4;letter-spacing:-0.650px;">&lsaquo;GV G</div>
<div id="vb4" class="t" style="left:317.0px;top:308.30px;font-size:10px;font-weight:normal;color:#fff;letter-spacing:0.000px;">A</div>
<div id="vb5" class="t" style="left:399.7px;top:306.26px;font-size:11px;font-weight:normal;color:#f4f4f4;letter-spacing:-1.700px;">MR</div>
<div id="vb6" class="t" style="left:223.5px;top:397.69px;font-size:10px;font-weight:normal;color:#fff;letter-spacing:0.000px;">R</div>
<div id="vb8" class="t" style="left:223.7px;top:487.16px;font-size:11px;font-weight:normal;color:#f4f4f4;letter-spacing:-0.150px;text-shadow:0 0 1px #000;">Slice: 43</div>
<div id="vb9" class="t" style="left:279.5px;top:487.16px;font-size:11px;font-weight:normal;color:#f4f4f4;letter-spacing:-0.204px;text-shadow:0 0 1px #000;">LUT C/W: 385.069 / 830.431</div>
</body></html>
